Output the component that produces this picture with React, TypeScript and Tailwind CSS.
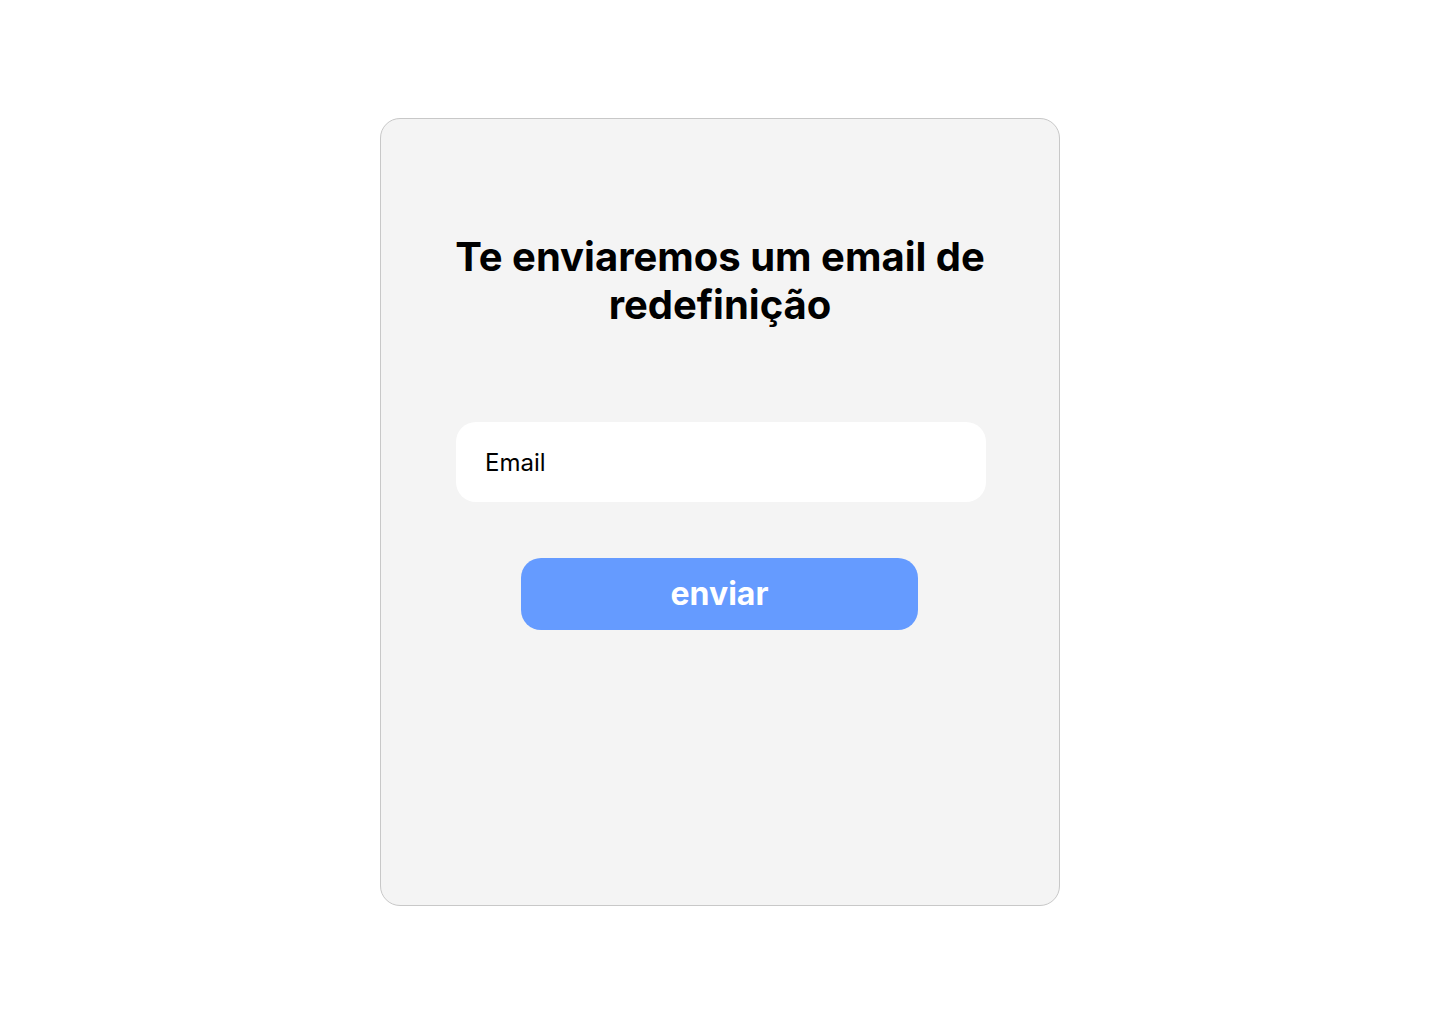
import React from "react";

export default function App() {
  return (
    <div className="min-h-screen w-full bg-white" style={{ fontFamily: "Inter, 'Noto Sans', sans-serif" }}>
      <div className="flex justify-center pt-[118px]">
        <div className="flex h-[788px] w-[680px] flex-col items-start rounded-[20px] border border-[#c8c8c8] bg-[#f4f4f4] pt-[114px]">
          <h1 className="w-full text-center text-[40px] font-bold leading-[48px] text-black">
            Te enviaremos um email de
            <br />
            redefinição
          </h1>
          <div className="ml-[75px] mt-[93px] flex h-[80px] w-[530px] items-center rounded-[20px] bg-white pl-[29px] pt-[2px]">
            <input
              type="email"
              placeholder="Email"
              className="w-full bg-transparent text-[24px] text-black outline-none placeholder:text-black"
            />
          </div>
          <button className="ml-[140px] mt-[56px] flex h-[72px] w-[397px] items-center justify-center rounded-[20px] bg-[#659bff] text-[32px] font-bold text-white">
            enviar
          </button>
        </div>
      </div>
    </div>
  );
}
